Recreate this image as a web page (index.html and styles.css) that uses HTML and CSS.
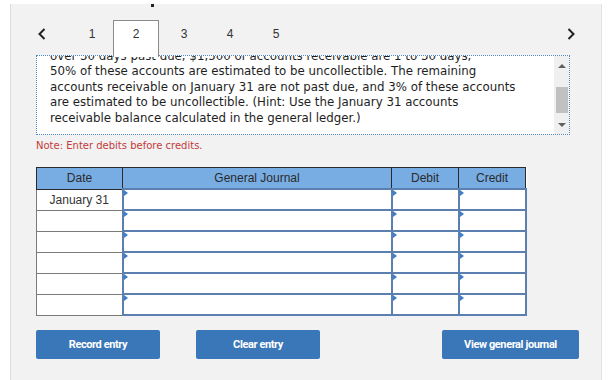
FILE: index.html
```html
<!DOCTYPE html>
<html>
<head>
<meta charset="utf-8">
<link rel="stylesheet" href="styles.css">
</head>
<body>
<div class="panel">
  <div class="cut"><span class="cut-mark"></span></div>
  <nav class="tabs">
    <span class="chev">
      <svg width="10" height="12" viewBox="0 0 10 12"><path d="M7.5 1 L2.5 6 L7.5 11" fill="none" stroke="#222" stroke-width="2"/></svg>
    </span>
    <span class="tab">1</span>
    <span class="tab active">2</span>
    <span class="tab">3</span>
    <span class="tab">4</span>
    <span class="tab">5</span>
    <span class="chev right">
      <svg width="10" height="12" viewBox="0 0 10 12"><path d="M2.5 1 L7.5 6 L2.5 11" fill="none" stroke="#222" stroke-width="2"/></svg>
    </span>
  </nav>
  <div class="question">
    <div class="qtext">
      <p>over 30 days past due, $1,500 of accounts receivable are 1 to 30 days,<br>50% of these accounts are estimated to be uncollectible. The remaining<br>accounts receivable on January 31 are not past due, and 3% of these accounts<br>are estimated to be uncollectible. (Hint: Use the January 31 accounts<br>receivable balance calculated in the general ledger.)</p>
    </div>
    <div class="scrollbar">
      <span class="sb-btn"><span class="tri-up"></span></span>
      <span class="sb-track"><span class="thumb"></span></span>
      <span class="sb-btn down"><span class="tri-down"></span></span>
    </div>
  </div>
  <p class="note">Note: Enter debits before credits.</p>
  <table class="journal">
    <thead>
      <tr>
        <th class="c-date">Date</th>
        <th class="c-gj">General Journal</th>
        <th class="c-num">Debit</th>
        <th class="c-num">Credit</th>
      </tr>
    </thead>
    <tbody>
      <tr><td class="date">January 31</td><td class="in"></td><td class="in"></td><td class="in"></td></tr>
      <tr><td class="date"></td><td class="in"></td><td class="in"></td><td class="in"></td></tr>
      <tr><td class="date"></td><td class="in"></td><td class="in"></td><td class="in"></td></tr>
      <tr><td class="date"></td><td class="in"></td><td class="in"></td><td class="in"></td></tr>
      <tr><td class="date"></td><td class="in"></td><td class="in"></td><td class="in"></td></tr>
      <tr><td class="date"></td><td class="in"></td><td class="in"></td><td class="in"></td></tr>
    </tbody>
  </table>
  <div class="actions">
    <button class="btn">Record entry</button>
    <button class="btn">Clear entry</button>
    <button class="btn wide">View general journal</button>
  </div>
</div>
</body>
</html>
```
FILE: styles.css
```css
html, body {
  margin: 0;
  padding: 0;
  background: #ffffff;
}
body {
  padding-top: 4px;
  font-family: "Liberation Sans", Arial, sans-serif;
}
.panel {
  margin-left: 10px;
  width: 592px;
  height: 376px;
  background: #f2f2f2;
  border-left: 1px solid #dcdcdc;
  border-right: 1px solid #e2e2e2;
  box-sizing: border-box;
}
.cut {
  height: 16px;
}
.cut-mark {
  display: block;
  margin-left: 140px;
  width: 3px;
  height: 3px;
  background: #222;
}
.tabs {
  display: flex;
  align-items: flex-start;
  height: 37px;
  padding-left: 26px;
  padding-right: 25px;
  position: relative;
  z-index: 2;
}
.chev {
  width: 10px;
  height: 12px;
  margin-top: 8px;
  margin-right: 20px;
}
.chev svg { display: block; }
.chev.right {
  margin-left: auto;
  margin-right: 0;
}
.tab {
  width: 46px;
  height: 37px;
  box-sizing: border-box;
  padding-top: 6px;
  line-height: 16px;
  text-align: center;
  font-size: 12px;
  color: #333;
  padding-left: 4px;
}
.tab.active {
  background: #fff;
  border: 1px solid #8a8a8a;
  border-bottom: none;
  padding-left: 0;
  padding-top: 5px;
}
.question {
  margin-top: -2px;
  margin-left: 25px;
  width: 534px;
  height: 80px;
  box-sizing: border-box;
  border: 1px dotted #4f86c6;
  background: #fff;
  display: flex;
  position: relative;
  z-index: 1;
}
.qtext {
  flex: 1;
  overflow: hidden;
  padding-left: 13px;
}
.qtext p {
  margin: -7px 0 0 0;
  font-family: "DejaVu Sans", Verdana, sans-serif;
  font-size: 11.8px;
  line-height: 15.4px;
  color: #1e1e1e;
  white-space: nowrap;
}
.scrollbar {
  width: 15px;
  background: #f0f0f0;
  display: flex;
  flex-direction: column;
}
.sb-btn {
  height: 20px;
  display: flex;
  align-items: center;
  justify-content: center;
}
.sb-btn.down {
  height: 18px;
}
.tri-up {
  width: 0;
  height: 0;
  border-left: 4px solid transparent;
  border-right: 4px solid transparent;
  border-bottom: 4px solid #606060;
}
.tri-down {
  width: 0;
  height: 0;
  border-left: 4px solid transparent;
  border-right: 4px solid transparent;
  border-top: 4px solid #606060;
}
.sb-track {
  flex: 1;
  padding-top: 11px;
  display: flex;
  justify-content: center;
}
.thumb {
  width: 12px;
  height: 26px;
  background: #c1c1c1;
}
.note {
  margin: 5px 0 0 25px;
  font-family: "DejaVu Sans", Verdana, sans-serif;
  font-size: 10px;
  line-height: 12px;
  color: #c43a3a;
}
.journal {
  margin: 15px 0 0 25px;
  border-collapse: collapse;
  table-layout: fixed;
  width: 485px;
  background: #fff;
}
.journal th {
  height: 20px;
  padding: 0;
  background: #78ade4;
  border: 1px solid #2a2a2a;
  font-weight: normal;
  font-size: 12px;
  color: #2a2a2a;
  text-align: center;
}
.c-date { width: 85px; }
.c-gj { width: 268px; }
.c-num { width: 66px; }
.journal td {
  height: 19px;
  padding: 0;
  font-size: 12px;
  color: #333;
  text-align: center;
}
.journal td.date {
  border: 1px solid #7a7a7a;
}
.journal td.in {
  border: 2px solid #5b80b0;
  position: relative;
}
.journal td.in::before {
  content: "";
  position: absolute;
  left: 0;
  top: 0;
  border-top: 3px solid transparent;
  border-bottom: 3px solid transparent;
  border-left: 4px solid #3d7cc9;
}
.actions {
  display: flex;
  margin: 14px 0 0 25px;
  width: 543px;
}
.btn {
  width: 124px;
  height: 29px;
  border: none;
  border-radius: 2px;
  background: #3a77b9;
  color: #fff;
  font-family: Roboto, "Liberation Sans", sans-serif;
  font-weight: 700;
  font-size: 11px;
  letter-spacing: -0.4px;
  padding: 0;
}
.btn + .btn {
  margin-left: 36px;
}
.btn.wide {
  width: 137px;
  margin-left: auto;
}
```
